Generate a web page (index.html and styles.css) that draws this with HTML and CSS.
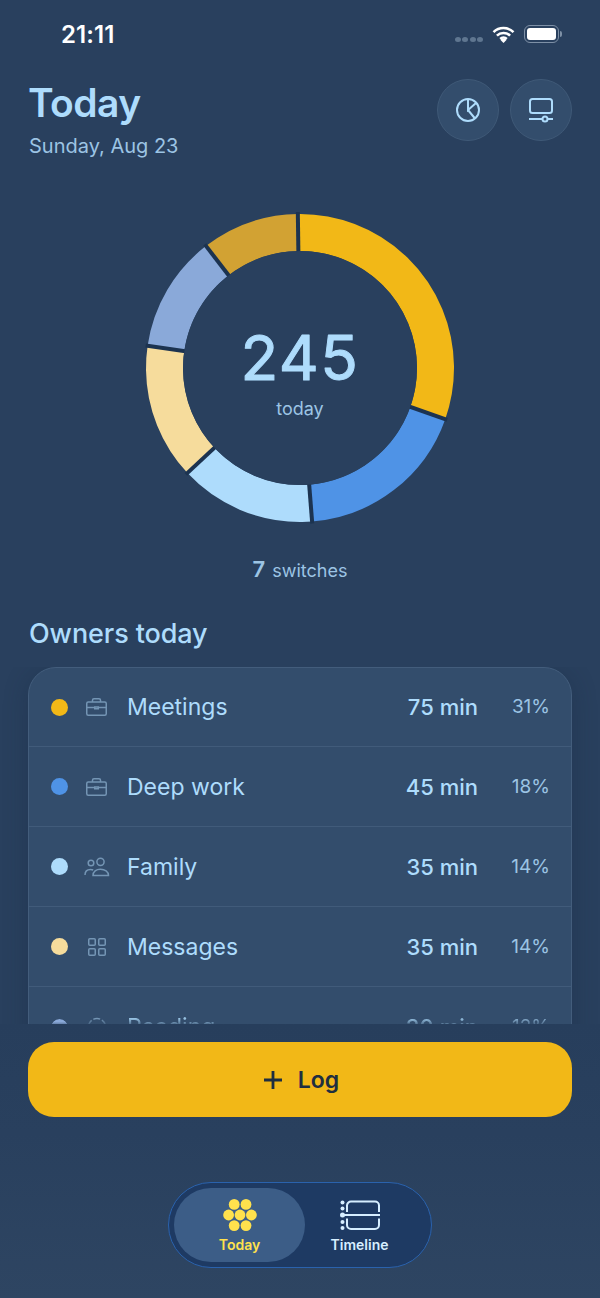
FILE: index.html
```html
<!DOCTYPE html>
<html lang="en">
<head>
<meta charset="utf-8">
<title>Today</title>
<link rel="stylesheet" href="styles.css">
</head>
<body>
<div class="screen">
  <div class="status">
    <span class="clock">21:11</span>
    <div class="status-icons">
      <div class="signal"><i></i><i></i><i></i><i></i></div>
      <svg class="wifi" viewBox="0 0 23 17" width="23" height="17"><path d="M1.500 6.200a14.200 14.200 0 0 1 20 0M4.900 9.600a9.400 9.400 0 0 1 13.200 0M8.200 12.800a4.600 4.600 0 0 1 6.600 0" fill="none" stroke="#fff" stroke-width="2.500"/><path d="M11.500 17l-3.200-3.200a4.500 4.500 0 0 1 6.400 0z" fill="#fff"/></svg>
      <div class="battery"><div class="battery-fill"></div></div>
      <div class="battery-cap"></div>
    </div>
  </div>

  <header class="head">
    <div class="head-text">
      <h1>Today</h1>
      <p>Sunday, Aug 23</p>
    </div>
    <div class="head-actions">
      <button class="round">
        <svg viewBox="0 0 26 26" width="26" height="26" fill="none" stroke="#aedcfc" stroke-width="2"><circle cx="13" cy="13" r="11"/><path d="M13 2v11l8-7M13 13l7 8.500"/></svg>
      </button>
      <button class="round">
        <svg viewBox="0 0 26 26" width="26" height="26" fill="none" stroke="#aedcfc" stroke-width="2"><rect x="2" y="2" width="22" height="14" rx="2.500"/><path d="M1 22h13.500M19.500 22H25"/><circle cx="17" cy="22" r="2.500"/></svg>
      </button>
    </div>
  </header>

  <div class="donut">
    <svg class="donut-svg" viewBox="0 0 308 308" width="308" height="308">
      <g class="ring" fill="none" stroke-width="37">
        <circle cx="154" cy="154" r="135.5" pathLength="245" stroke="#f2b817" stroke-dasharray="75 170"/>
        <circle cx="154" cy="154" r="135.5" pathLength="245" stroke="#4f93e6" stroke-dasharray="45 200" stroke-dashoffset="-75"/>
        <circle cx="154" cy="154" r="135.5" pathLength="245" stroke="#aedcfc" stroke-dasharray="35 210" stroke-dashoffset="-120"/>
        <circle cx="154" cy="154" r="135.5" pathLength="245" stroke="#f6dc9c" stroke-dasharray="35 210" stroke-dashoffset="-155"/>
        <circle cx="154" cy="154" r="135.5" pathLength="245" stroke="#8aa9d9" stroke-dasharray="30 215" stroke-dashoffset="-190"/>
        <circle cx="154" cy="154" r="135.5" pathLength="245" stroke="#d2a233" stroke-dasharray="25 220" stroke-dashoffset="-220"/>
      </g>
      <g class="gaps" stroke="#1c3350" stroke-width="4">
        <path d="M154 154V-2" transform="rotate(-0.8 154 154)"/>
        <path d="M154 154V-2" transform="rotate(109.4 154 154)"/>
        <path d="M154 154V-2" transform="rotate(175.5 154 154)"/>
        <path d="M154 154V-2" transform="rotate(227 154 154)"/>
        <path d="M154 154V-2" transform="rotate(278.3 154 154)"/>
        <path d="M154 154V-2" transform="rotate(322.4 154 154)"/>
      </g>
      <circle cx="154" cy="154" r="117" fill="#29405e"/>
      <text class="donut-num" x="154" y="165.500" text-anchor="middle">245</text>
    </svg>
    <div class="donut-center">
      <div class="donut-label">today</div>
    </div>
  </div>

  <div class="switches"><b>7</b> switches</div>

  <h2>Owners today</h2>

  <div class="list-clip">
    <div class="list">
      <div class="row row-first">
        <span class="dot dot-a"></span>
        <svg class="ico" viewBox="0 0 26 24" width="26" height="24"><path d="M4.250 7h16.500a1.500 1.500 0 0 1 1.500 1.500v10.250a1.500 1.500 0 0 1-1.500 1.500H4.250a1.500 1.500 0 0 1-1.500-1.500V8.500A1.500 1.500 0 0 1 4.250 7zM8.500 7V5.250a1.500 1.500 0 0 1 1.500-1.500h5a1.500 1.500 0 0 1 1.500 1.500V7M2.750 12.500h8M14.250 12.500h8M10.750 12h3.500v1.800h-3.500z"/></svg>
        <span class="name">Meetings</span>
        <span class="mins">75 min</span>
        <span class="pct">31%</span>
      </div>
      <div class="row">
        <span class="dot dot-b"></span>
        <svg class="ico" viewBox="0 0 26 24" width="26" height="24"><path d="M4.250 7h16.500a1.500 1.500 0 0 1 1.500 1.500v10.250a1.500 1.500 0 0 1-1.500 1.500H4.250a1.500 1.500 0 0 1-1.500-1.500V8.500A1.500 1.500 0 0 1 4.250 7zM8.500 7V5.250a1.500 1.500 0 0 1 1.500-1.500h5a1.500 1.500 0 0 1 1.500 1.500V7M2.750 12.500h8M14.250 12.500h8M10.750 12h3.500v1.800h-3.500z"/></svg>
        <span class="name">Deep work</span>
        <span class="mins">45 min</span>
        <span class="pct">18%</span>
      </div>
      <div class="row">
        <span class="dot dot-c"></span>
        <svg class="ico" viewBox="0 0 26 24" width="26" height="24"><circle cx="7" cy="8" r="2.800"/><circle cx="16.500" cy="6.800" r="3.600"/><path d="M1 20c0-3.600 2.400-5.600 5.500-5.600 1 0 1.900.2 2.700.6M9 20.500c0-4 3.200-6.300 7.500-6.300s8 2.300 8 6.300z"/></svg>
        <span class="name">Family</span>
        <span class="mins">35 min</span>
        <span class="pct">14%</span>
      </div>
      <div class="row">
        <span class="dot dot-d"></span>
        <svg class="ico" viewBox="0 0 26 24" width="26" height="24"><rect x="4.750" y="3.750" width="6.500" height="6.500" rx="1"/><rect x="14.750" y="3.750" width="6.500" height="6.500" rx="1"/><rect x="4.750" y="13.750" width="6.500" height="6.500" rx="1"/><rect x="14.750" y="13.750" width="6.500" height="6.500" rx="1"/></svg>
        <span class="name">Messages</span>
        <span class="mins">35 min</span>
        <span class="pct">14%</span>
      </div>
      <div class="row row-fade">
        <span class="dot dot-e"></span>
        <svg class="ico" viewBox="0 0 26 24" width="26" height="24"><circle cx="13" cy="12" r="8.500" stroke-dasharray="7 2"/></svg>
        <span class="name">Reading</span>
        <span class="mins">30 min</span>
        <span class="pct">12%</span>
      </div>
    </div>
  </div>

  <div class="bottom">
    <button class="log">
      <svg viewBox="0 0 20 20" width="20" height="20"><path d="M10 1v18M1 10h18" stroke="#1f2e40" stroke-width="2.800" fill="none"/></svg>
      <span>Log</span>
    </button>
    <nav class="tabs">
      <div class="tab tab-on">
        <svg viewBox="0 0 34 32" width="34" height="32" fill="#ffe14d"><circle cx="11.200" cy="5.400" r="5.400"/><circle cx="23" cy="5.400" r="5.400"/><circle cx="5.600" cy="16" r="5.400"/><circle cx="17" cy="16" r="5.400"/><circle cx="28.400" cy="16" r="5.400"/><circle cx="11.200" cy="26.600" r="5.400"/><circle cx="23" cy="26.600" r="5.400"/></svg>
        <span>Today</span>
      </div>
      <div class="tab tab-off">
        <svg viewBox="0 0 40 32" width="40" height="32" fill="none" stroke="#d6eeff" stroke-width="2"><path d="M7 13V6.500a4 4 0 0 1 4-4h24a4 4 0 0 1 4 4V13M7 19.500V26a4 4 0 0 0 4 4h24a4 4 0 0 0 4-4v-6.500M3 16h37"/><g fill="#d6eeff" stroke="none"><circle cx="2.500" cy="3.500" r="2"/><circle cx="2.500" cy="9.500" r="2"/><circle cx="2.500" cy="16" r="2.500"/><circle cx="2.500" cy="23" r="2"/><circle cx="2.500" cy="29" r="2"/></g></svg>
        <span>Timeline</span>
      </div>
    </nav>
  </div>
</div>
</body>
</html>
```
FILE: styles.css
```css
* { box-sizing: border-box; margin: 0; padding: 0; }
html, body { width: 600px; height: 1298px; overflow: hidden; }
body { background: #29405e; font-family: Inter, "Noto Sans", sans-serif; color: #aedcfc; }
.screen { width: 600px; height: 1298px; display: flex; flex-direction: column; overflow: hidden; background: #29405e; }

.status { height: 79px; padding: 22px 28px 0 61px; display: flex; justify-content: space-between; align-items: flex-start; flex: none; }
.clock { color: #fff; font-size: 24px; font-weight: 600; line-height: 26px; letter-spacing: .1px; }
.status-icons { display: flex; align-items: center; margin-top: 3px; margin-right: 10px; }
.signal { display: flex; gap: 1.500px; margin-right: 9px; margin-top: 11px; }
.signal i { width: 5.900px; height: 5px; border-radius: 50%; background: #5f7690; }
.wifi { margin-right: 9px; }
.battery { width: 35px; height: 18px; border: 1.500px solid #7e90a6; border-radius: 6px; padding: 2px; }
.battery-fill { width: 100%; height: 100%; background: #fff; border-radius: 3px; }
.battery-cap { width: 2px; height: 6px; background: #7e90a6; border-radius: 0 2px 2px 0; margin-left: 1px; }

.head { display: flex; justify-content: space-between; padding: 0 28px; flex: none; height: 135px; }
.head-text h1 { font-size: 39px; font-weight: 600; line-height: 48px; letter-spacing: -.6px; }
.head-text p { font-size: 20px; line-height: 30px; color: #9cc4e4; margin-top: 4px; margin-left: 1px; }
.head-actions { display: flex; gap: 11px; }
.round { width: 62px; height: 62px; border-radius: 50%; background: #334d6c; border: 1px solid #3f5977; display: flex; align-items: center; justify-content: center; }

.donut { position: relative; width: 308px; height: 308px; margin: 0 auto; flex: none; }
.donut-svg { display: block; overflow: visible; }
.ring { transform: rotate(-90.8deg); transform-origin: 154px 154px; }
.donut-center { position: absolute; inset: 0; display: flex; flex-direction: column; align-items: center; padding-top: 183px; }
.donut-num { font-family: Inter, sans-serif; font-size: 62px; font-weight: 400; letter-spacing: 1.500px; fill: #aedcfc; stroke: #aedcfc; stroke-width: 1px; stroke-linejoin: round; stroke-linecap: round; }
.donut-label { font-size: 18px; line-height: 24px; color: #9cc4e4; }

.switches { text-align: center; font-size: 18px; line-height: 26px; color: #9cc4e4; margin-top: 34px; flex: none; }
.switches b { font-size: 22px; font-weight: 600; margin-right: 2px; }

h2 { font-size: 27px; font-weight: 500; line-height: 34px; padding: 0 29px; margin-top: 33px; flex: none; letter-spacing: -.1px; }

.list-clip { flex: 1; min-height: 0; overflow: hidden; margin-top: 16px; padding: 0 28px; }
.list { background: #334d6c; border: 1px solid #435d7c; border-radius: 28px; box-shadow: 0 4px 24px rgba(20, 35, 60, .3); }
.row { display: flex; align-items: center; height: 80px; padding: 0 21px 0 22px; border-bottom: 1px solid #415b7a; }
.row-first { height: 79px; }
.row:last-child { border-bottom: none; }
.row-fade > * { mask-image: linear-gradient(#000 15%, transparent 50%); }
.dot { width: 17px; height: 17px; border-radius: 50%; flex: none; }
.dot-a { background: #f2b817; }
.dot-b { background: #4f93e6; }
.dot-c { background: #aedcfc; }
.dot-d { background: #f6dc9c; }
.dot-e { background: #8aa9d9; }
.ico { fill: none; stroke: #7495b4; stroke-width: 1.500; margin: 0 17px 0 16px; flex: none; }
.name { flex: 1; font-size: 23px; line-height: 30px; }
.mins { font-size: 22px; font-weight: 500; line-height: 30px; }
.pct { font-size: 19px; line-height: 30px; width: 72px; text-align: right; color: #9cc4e4; }

.bottom { flex: none; height: 274px; background: linear-gradient(#273e5c, #29405e 40%, #2e4562); padding: 18px 28px 0; display: flex; flex-direction: column; align-items: center; }
.log { width: 544px; height: 75px; background: #f2b817; border: none; border-radius: 26px; display: flex; align-items: center; justify-content: center; gap: 15px; padding-left: 2px; color: #1f2e40; font: 600 23px Inter, sans-serif; }
.tabs { margin-top: 65px; width: 264px; height: 86px; padding: 5px; border-radius: 43px; background: #1e3a63; border: 1.500px solid #2a62ad; display: flex; }
.tab { flex: 1; border-radius: 37px; display: flex; flex-direction: column; align-items: center; justify-content: center; gap: 5px; padding-top: 3px; font-size: 14px; font-weight: 600; line-height: 18px; color: #d6eeff; }
.tab-on { flex: none; width: 131px; background: #3c5d87; color: #ffe14d; }
.tab-off { padding-right: 12px; }
```
